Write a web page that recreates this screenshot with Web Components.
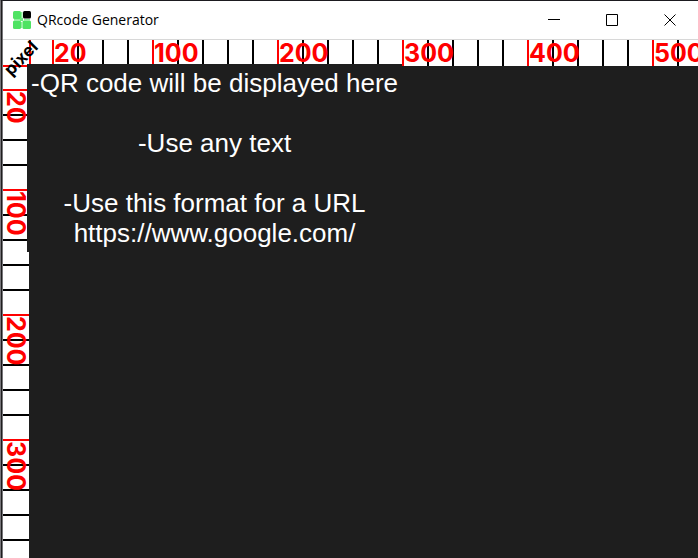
<!DOCTYPE html>
<html lang="en">
<head>
<meta charset="utf-8">
<title>QRcode Generator</title>
<style>
  html, body { margin: 0; height: 100%; background: #1e1e1e; }
</style>
</head>
<body>
<app-window>
  <title-bar slot="bar">QRcode Generator</title-bar>
  <pixel-ruler slot="top" values="20,100,200,300,400,500"></pixel-ruler>
  <pixel-ruler slot="side" vertical values="20,100,200,300"></pixel-ruler>
  <ruler-unit slot="corner">pixel</ruler-unit>
  <qr-placeholder>-QR code will be displayed here

-Use any text

-Use this format for a URL
https://www.google.com/</qr-placeholder>
</app-window>
<script>
class BaseElement extends HTMLElement {
  render(html) { this.attachShadow({ mode: 'open' }).innerHTML = html; }
}

customElements.define('app-window', class extends BaseElement {
  connectedCallback() {
    this.render(`
      <style>
        :host { display: grid; grid-template: auto auto 1fr / 26px 1fr; height: 100vh; box-sizing: border-box;
          overflow: hidden; border-top: 1px solid #1b1a1f; border-left: 3px double #77757a; background: #1e1e1e; }
        slot[name=bar] { display: block; grid-area: 1 / 1 / 2 / 3; min-width: 0; }
        slot[name=top] { display: block; grid-area: 2 / 2 / 3 / 3; min-width: 0; }
        slot[name=side] { display: block; grid-area: 3 / 1 / 4 / 2; min-height: 0; }
        slot[name=corner] { display: block; grid-area: 2 / 1 / 3 / 2; min-height: 0; }
        main { grid-area: 3 / 2 / 4 / 3; min-width: 0; }
      </style>
      <slot name="bar"></slot>
      <slot name="corner"></slot>
      <slot name="top"></slot>
      <slot name="side"></slot>
      <main><slot></slot></main>`);
  }
});

customElements.define('title-bar', class extends BaseElement {
  connectedCallback() {
    this.render(`
      <style>
        :host { display: flex; align-items: center; height: 38px; background: #fff; color: #000;
          border-bottom: 1px solid #d8d8d8; font: 14px/20px "Open Sans", "Noto Sans", sans-serif; }
        .logo { width: 18px; height: 18px; margin: 0 6px 0 10px; flex: none; }
        h1 { flex: 1; margin: 0; font: inherit; white-space: nowrap; overflow: hidden; }
        button { flex: none; width: 58px; height: 38px; padding: 0; border: 0; background: none;
          display: flex; align-items: center; justify-content: center; }
        button svg { width: 12px; height: 12px; fill: none; stroke: #000; }
        nav { display: flex; margin-right: -1px; }
      </style>
      <svg class="logo" viewBox="0 0 18 18" aria-hidden="true">
        <g fill="#4fe363">
          <rect x="0" y="0" width="8" height="8" rx="1.500"/>
          <rect x="0" y="9.500" width="8" height="8.500" rx="1.500"/>
          <rect x="9.500" y="9.500" width="8.500" height="8.500" rx="1.500"/>
        </g>
        <path fill="#8df09a" d="M1 8h6v1.500H1zM8 1h1.500v6H8zM11 8h6v1.500h-6zM8 11h1.500v6H8z"/>
        <path fill="#6be97c" d="M7 7h3v3H7z"/>
        <rect x="10" y="0" width="8" height="7.500" rx="1.500" fill="#000"/>
      </svg>
      <h1><slot></slot></h1>
      <nav>
        <button aria-label="Minimize"><svg viewBox="0 0 12 12"><path d="M0 5.500h12"/></svg></button>
        <button aria-label="Maximize"><svg viewBox="0 0 12 12"><path d="M.5.5h11v11H.5z"/></svg></button>
        <button aria-label="Close"><svg viewBox="0 0 12 12"><path d="M.5.5l11 11M11.500.5l-11 11"/></svg></button>
      </nav>`);
  }
});

customElements.define('pixel-ruler', class extends BaseElement {
  connectedCallback() {
    const marks = this.getAttribute('values').split(',')
      .map((v, i) => `<span class="${i ? 'major' : 'first'}">${v}</span>`).join('');
    this.render(`
      <style>
        :host { display: block; block-size: 26px; background: #fff; color: #f00;
          font: 700 25px/26px Inter, sans-serif; }
        :host([vertical]) { writing-mode: vertical-rl; height: 100%; }
        .scale { display: flex; block-size: 26px; padding-inline-start: 23px;
          background: repeating-linear-gradient(90deg, #000 0 2px, transparent 2px 25px) 23px 0 no-repeat; }
        :host([vertical]) .scale { height: 100%; box-sizing: border-box;
          background: repeating-linear-gradient(180deg, #000 0 2px, transparent 2px 25px) 0 23px no-repeat; }
        span { flex: none; box-sizing: border-box; border-inline-start: 2px solid #f00; inline-size: 125px; }
        .first { inline-size: 100px; }
      </style>
      <div class="scale">${marks}</div>`);
  }
});

customElements.define('ruler-unit', class extends BaseElement {
  connectedCallback() {
    this.render(`
      <style>
        :host { display: block; position: relative; z-index: 0; width: 28px; height: 27px; margin-bottom: -1px; box-sizing: border-box;
          background: linear-gradient(#f00, #f00) right / 2px 100% no-repeat, linear-gradient(#f00, #f00) bottom / 100% 2px no-repeat, #fff;
          font: 700 17px/20px Inter, sans-serif; color: #000; }
        b { position: absolute; left: -2px; top: 8px; transform: rotate(-46deg); font-weight: 700; }
      </style>
      <b><slot></slot></b>`);
  }
});

customElements.define('qr-placeholder', class extends BaseElement {
  connectedCallback() {
    this.render(`
      <style>
        :host { display: block; position: relative; z-index: 1; width: fit-content; box-sizing: border-box;
          margin: -2px 0 0 -2px; padding: 4px; background: #1e1e1e; color: #fff;
          font: 26px/30px "Liberation Sans", Arial, sans-serif; text-align: center; }
        slot { display: block; white-space: pre; }
      </style>
      <slot></slot>`);
  }
});
</script>
</body>
</html>
